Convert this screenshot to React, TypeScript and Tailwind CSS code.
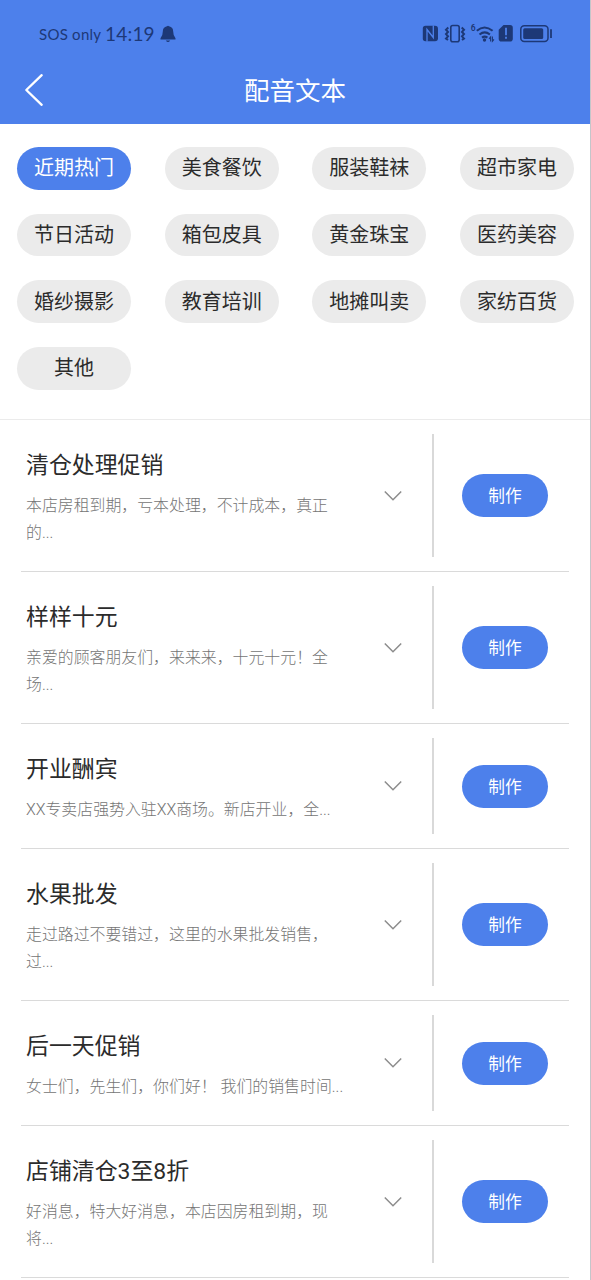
import clsx from "clsx";
import { useState } from "react";

const categories = [
	"近期热门",
	"美食餐饮",
	"服装鞋袜",
	"超市家电",
	"节日活动",
	"箱包皮具",
	"黄金珠宝",
	"医药美容",
	"婚纱摄影",
	"教育培训",
	"地摊叫卖",
	"家纺百货",
	"其他",
];

type Script = {
	title: string;
	lines: string[];
};

const scripts: Script[] = [
	{
		title: "清仓处理促销",
		lines: ["本店房租到期，亏本处理，不计成本，真正", "的..."],
	},
	{
		title: "样样十元",
		lines: ["亲爱的顾客朋友们，来来来，十元十元！全", "场..."],
	},
	{
		title: "开业酬宾",
		lines: ["XX专卖店强势入驻XX商场。新店开业，全..."],
	},
	{
		title: "水果批发",
		lines: ["走过路过不要错过，这里的水果批发销售，", "过..."],
	},
	{
		title: "后一天促销",
		lines: ["女士们，先生们，你们好！ 我们的销售时间..."],
	},
	{
		title: "店铺清仓3至8折",
		lines: ["好消息，特大好消息，本店因房租到期，现", "将..."],
	},
];

function StatusIcons() {
	return (
		<svg width="132" height="22" viewBox="0 0 132 22" fill="none">
			{/* nfc */}
			<path
				d="M5.500 2.800H15q3 0 3 3v9.400q0 3-3 3H5.500q-2.700 0-2.700-2.700V5.500q0-2.700 2.700-2.700z"
				fill="#1d3877"
			/>
			<path d="M7 18.500V6.500l6.300 8V2.500" stroke="#4d80eb" strokeWidth="1.300" />
			{/* vibrate */}
			<rect x="30.800" y="2.500" width="8.400" height="16.200" rx="2" stroke="#1d3877" strokeWidth="1.600" />
			<path
				d="m28.300 4.500-2.300 2.200 2 2.200-2 2.200 2 2.200-2 2.200 2 1.500M41.700 4.500l2.300 2.200-2 2.200 2 2.200-2 2.200 2 2.200-2 1.500"
				stroke="#1d3877"
				strokeWidth="2"
			/>
			{/* wifi */}
			<path
				d="M56.800 7.800q7.600-6.600 15.800 0M59.500 11.500q5.200-4.300 10.400 0M62 14.600q2.700-2 5.400 0"
				stroke="#1d3877"
				strokeWidth="2.100"
			/>
			<circle cx="64.500" cy="17" r="1.700" fill="#1d3877" />
			<path d="m69 15.800 1.600-1.800v4.500M74 16.300l-1.600 1.900v-4.700" stroke="#1d3877" strokeWidth="1.100" />
			<text
				x="50.800"
				y="7.800"
				fontSize="8.500"
				fontWeight="600"
				fontFamily="Roboto, sans-serif"
				fill="#1d3877"
			>
				6
			</text>
			{/* sim alert */}
			<path
				d="M83.500 2h6.500q2.800 0 2.800 2.800v11q0 2.800-2.800 2.800h-8.500q-2.800 0-2.800-2.800V6.800z"
				fill="#1d3877"
			/>
			<path d="M86 4.800v7.500M86 13.800v2" stroke="#4d80eb" strokeWidth="1.800" />
			{/* battery */}
			<rect x="100.800" y="2.800" width="27.200" height="15.700" rx="3.500" stroke="#1d3877" strokeWidth="1.500" />
			<rect x="103.200" y="5.200" width="20" height="10.900" rx="1.500" fill="#1d3877" />
			<path d="M131 6.300v8.700" stroke="#1d3877" strokeWidth="1.800" />
		</svg>
	);
}

function StatusBar() {
	return (
		<div className="flex h-[66px] items-center justify-between pl-[39px] pr-[38px] pt-[2px] text-[#1d3877]">
			<div className="flex items-center font-['Lato','Noto_Sans_CJK_SC',sans-serif]">
				<span className="w-[66px] whitespace-nowrap text-[15px] leading-5 tracking-[0.250px]">
					SOS only
				</span>
				<span className="w-[55px] whitespace-nowrap text-[19px] leading-5 tracking-[0.2px]">
					14:19
				</span>
				<svg width="16" height="18" viewBox="0 0 16 18" fill="currentColor">
					<path d="M7 1.200q1-1 2 0 4.200 1 4.200 5.300 0 4.500 2.300 6.800v1.200H.5v-1.200q2.300-2.300 2.300-6.800Q2.800 2.200 7 1.200zM5.800 15.500h4.400Q8 18.500 5.800 15.500z" />
				</svg>
			</div>
			<StatusIcons />
		</div>
	);
}

function Header() {
	return (
		<header className="h-[124px] bg-[#4d80eb]">
			<StatusBar />
			<div className="grid h-[47px] grid-cols-[60px_1fr_60px] items-center">
				<button type="button" aria-label="返回" className="pl-[24px]">
					<svg width="20" height="34" viewBox="0 0 20 34" fill="none">
						<path
							d="M17.700 2.200 2.300 17l15.400 14.800"
							stroke="white"
							strokeWidth="2.300"
							strokeLinecap="round"
							strokeLinejoin="round"
						/>
					</svg>
				</button>
				<h1 className="pt-[2px] text-center text-[25.500px] leading-9 text-white">配音文本</h1>
			</div>
		</header>
	);
}

function ScriptRow({ title, lines }: Script) {
	return (
		<li className="flex border-b border-[#dadada]">
			<div className="flex-1 pb-[25px] pl-[5px] pt-[29px]">
				<h2 className="text-[22.900px] leading-[34px] text-[#2b2b2b]">{title}</h2>
				<p className="mt-[9px] whitespace-nowrap text-[15.900px] font-light leading-[27px] text-[#757575]">
					{lines.map((line) => (
						<span key={line} className="block">
							{line}
						</span>
					))}
				</p>
			</div>
			<button type="button" aria-label="展开" className="flex w-[79px] items-center justify-center">
				<svg width="20" height="12" viewBox="0 0 20 12" fill="none">
					<path d="m1.800 1.500 8.200 8.200 8.200-8.200" stroke="#8c8c8c" strokeWidth="1.500" />
				</svg>
			</button>
			<div className="my-[14px] w-[2px] bg-[#d9d9d9]" />
			<div className="flex w-[135px] items-center pl-[28px]">
				<button
					type="button"
					className="h-[43px] w-[86px] rounded-full bg-[#4d80eb] pt-[3px] text-[16.700px] leading-6 text-white"
				>
					制作
				</button>
			</div>
		</li>
	);
}

export default function App() {
	const [active, setActive] = useState(categories[0]);

	return (
		<div className="h-[1280px] overflow-hidden border-r border-[#c4c6ca] bg-white font-['Roboto','Noto_Sans_CJK_SC',sans-serif]">
			<Header />

			<nav className="grid h-[296px] grid-cols-[repeat(4,114px)] content-start justify-between gap-y-[24px] border-b border-[#ebebeb] pl-[17px] pr-[16px] pt-[23px]">
				{categories.map((category) => (
					<button
						key={category}
						type="button"
						onClick={() => setActive(category)}
						className={clsx(
							"h-[42.700px] rounded-full text-[20px] leading-7",
							category === active ? "bg-[#4d80eb] text-white" : "bg-[#ebebeb] text-[#2b2b2b]",
						)}
					>
						{category}
					</button>
				))}
			</nav>

			<ul className="ml-[21px] mr-[21px]">
				{scripts.map((script) => (
					<ScriptRow key={script.title} {...script} />
				))}
			</ul>
		</div>
	);
}
